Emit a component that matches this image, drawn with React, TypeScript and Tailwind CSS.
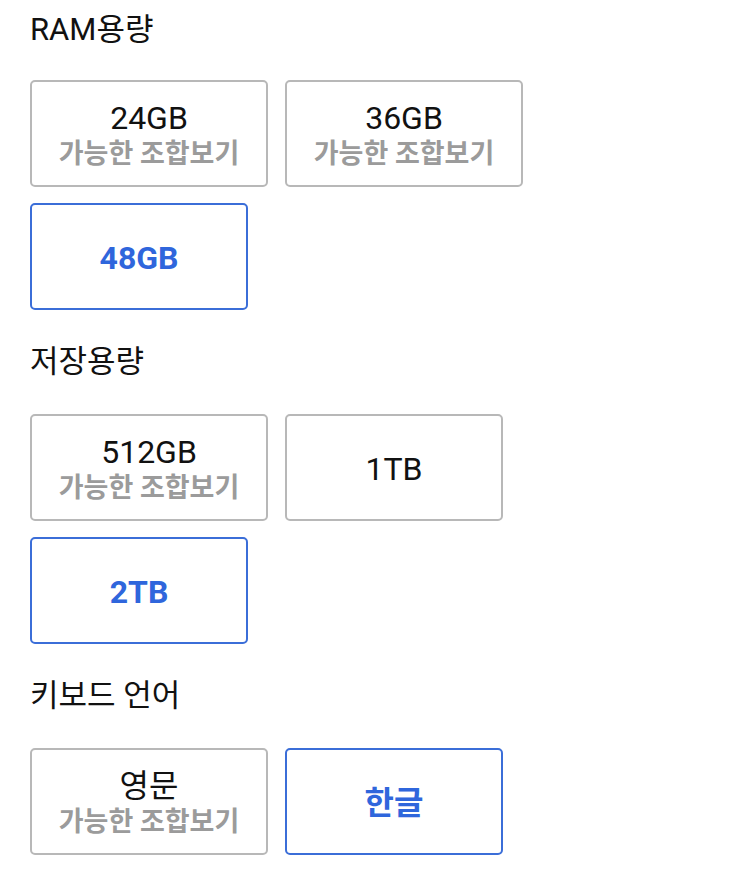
type Option = {
  label: string;
  sub?: boolean;
  selected?: boolean;
  wide?: boolean;
};

type Section = {
  title: string;
  options: Option[];
};

const sections: Section[] = [
  {
    title: "RAM용량",
    options: [
      { label: "24GB", sub: true, wide: true },
      { label: "36GB", sub: true, wide: true },
      { label: "48GB", selected: true },
    ],
  },
  {
    title: "저장용량",
    options: [
      { label: "512GB", sub: true, wide: true },
      { label: "1TB" },
      { label: "2TB", selected: true },
    ],
  },
  {
    title: "키보드 언어",
    options: [
      { label: "영문", sub: true, wide: true },
      { label: "한글", selected: true },
    ],
  },
];

function OptionBox({ option }: { option: Option }) {
  return (
    <button
      className={
        "flex h-[107px] flex-col items-center justify-center rounded-[5px] border-2 bg-white " +
        (option.wide ? "w-[238px] pt-[4px] " : "w-[218px] pt-[2px] ") +
        (option.selected ? "border-[#3b6ed8]" : "border-[#b8b8b8]")
      }
    >
      <span
        className={
          "text-[32px] leading-[36px] " +
          (option.selected ? "font-bold text-[#2f66dc]" : "text-[#111111]")
        }
      >
        {option.label}
      </span>
      {option.sub && (
        <span className="text-[27px] font-bold leading-[36px] text-[#9b9b9b]">
          가능한 조합보기
        </span>
      )}
    </button>
  );
}

export default function App() {
  return (
    <div
      className="min-h-screen bg-white px-[30px] pt-[8px]"
      style={{ fontFamily: 'Roboto, "Noto Sans CJK KR", sans-serif' }}
    >
      {sections.map((section, i) => (
        <div key={section.title} className={i === 0 ? "" : "mt-[30px]"}>
          <h2 className="h-[44px] text-[31px] font-normal leading-[44px] text-[#111111]">
            {section.title}
          </h2>
          <div className={"flex flex-wrap gap-x-[17px] gap-y-[16px] " + (i === 0 ? "mt-[28px]" : "mt-[30px]")}>
            {section.options.map((o) => (
              <OptionBox key={o.label} option={o} />
            ))}
          </div>
        </div>
      ))}
    </div>
  );
}
